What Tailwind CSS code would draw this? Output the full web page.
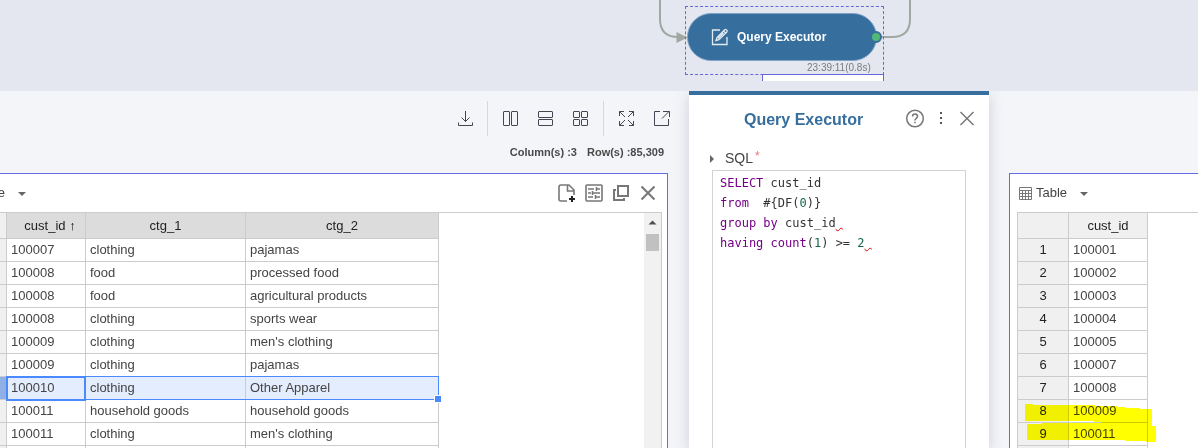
<!DOCTYPE html>
<html lang="en">

<head>
  <meta charset="UTF-8">
  <meta name="viewport" content="width=device-width, initial-scale=1.0">
  <title>Query Executor</title>
  <script src="https://cdn.jsdelivr.net/npm/@tailwindcss/browser@4"></script>
</head>

<body class="flex flex-col h-screen overflow-hidden bg-[#f4f5f8] font-['Liberation_Sans',Arial,sans-serif] text-[13px] text-[#444]">

  <!-- Workflow canvas -->
  <div class="relative h-[91px] shrink-0 bg-[#e4e7ef]">
    <svg class="absolute left-[640px] top-0 w-[300px] h-[91px]" viewBox="0 0 300 91" fill="none" stroke="#a0a8a3" stroke-width="2">
      <path d="M20 0V19Q20 37 38 37"></path>
      <path d="M36.500 32L47.500 37.500L36.500 43Z" fill="#a0a8a3" stroke="none"></path>
      <path d="M242 37H252Q270 37 270 19V0"></path>
    </svg>
    <div class="absolute left-[685px] top-[6px] w-[199px] h-[69px] border border-dashed border-[#6468dc]"></div>
    <div class="absolute left-[762px] top-[74px] w-[122px] h-[7px] bg-white border border-b-0 border-[#6468dc]"></div>
    <button type="button" class="absolute left-[687px] top-[13px] w-[190px] h-12 flex items-center gap-2 pl-[23px] rounded-full bg-[#366e9e] border border-[#7fa3c6] text-white text-xs font-bold">
      <svg class="w-[18px] h-[18px]" viewBox="0 0 18 18" fill="none" stroke="#e3ebf2" stroke-width="1.300">
        <path d="M9 2H1.500V16.500H16V9"></path>
        <path d="M5 12.500L6 9.500L13.700 1.800Q14.500 1 15.400 1.900L15.800 2.300Q16.600 3.200 15.800 4L8 11.700ZM12.500 3L14.800 5.200M7 10.500L12.500 5"></path>
      </svg>
      <span>Query Executor</span>
    </button>
    <span class="absolute left-[870px] top-[31px] w-3 h-3 rounded-full bg-[#52b878] border-2 border-[#366e9e]"></span>
    <span class="absolute left-[807px] top-[62px] text-[10px] leading-3 text-[#7a7a80]">23:39:11(0.8s)</span>
  </div>

  <main class="flex flex-1 min-h-0">

    <!-- Input data -->
    <section class="flex flex-col flex-1 min-w-0 overflow-hidden">
      <div class="flex items-center justify-end pt-[10px] pr-[10px] text-[#444753]">
        <button type="button" aria-label="Download" class="w-[35px] flex justify-center">
          <svg class="w-4 h-4" viewBox="0 0 16 16" fill="none" stroke="currentColor"><path d="M8.500 0V10.500M4.500 6.500L8.500 10.500L12.500 6.500M1.500 11.500V14.500H15.500V11.500"></path></svg>
        </button>
        <span class="w-px h-[35px] mx-[5px] bg-[#d5d8df]"></span>
        <button type="button" aria-label="Split vertically" class="w-[35px] flex justify-center">
          <svg class="w-4 h-4" viewBox="0 0 16 16" fill="none" stroke="currentColor"><rect x=".5" y=".5" width="6" height="14" rx=".5"></rect><rect x="8.500" y=".5" width="6" height="14" rx=".5"></rect></svg>
        </button>
        <button type="button" aria-label="Split horizontally" class="w-[35px] flex justify-center">
          <svg class="w-4 h-4" viewBox="0 0 16 16" fill="none" stroke="currentColor"><rect x=".5" y=".5" width="14" height="6" rx=".5"></rect><rect x=".5" y="8.500" width="14" height="6" rx=".5"></rect></svg>
        </button>
        <button type="button" aria-label="Grid" class="w-[35px] flex justify-center">
          <svg class="w-4 h-4" viewBox="0 0 16 16" fill="none" stroke="currentColor"><rect x=".5" y=".5" width="6" height="6" rx=".5"></rect><rect x="8.500" y=".5" width="6" height="6" rx=".5"></rect><rect x=".5" y="8.500" width="6" height="6" rx=".5"></rect><rect x="8.500" y="8.500" width="6" height="6" rx=".5"></rect></svg>
        </button>
        <span class="w-px h-[35px] mx-[5px] bg-[#d5d8df]"></span>
        <button type="button" aria-label="Full screen" class="w-[35px] flex justify-center">
          <svg class="w-4 h-4" viewBox="0 0 16 16" fill="none" stroke="currentColor"><path d="M.5 5V.5H5M.5 .5L6 6M10 .5H14.500V5M14.500 .5L9 6M.5 10V14.500H5M.5 14.500L6 9M10 14.500H14.500V10M14.500 14.500L9 9"></path></svg>
        </button>
        <button type="button" aria-label="Open in new window" class="w-[35px] flex justify-center">
          <svg class="w-4 h-4" viewBox="0 0 16 16" fill="none" stroke="currentColor"><path d="M6 .5H.5V14.500H14.500V8M9 .5H15.500V6M15 .5L8 7.500"></path></svg>
        </button>
      </div>
      <div class="flex justify-end gap-[10px] pt-2 pb-[13px] pr-[25px] text-[11px] leading-4 font-bold text-[#4a4a4a]">
        <span>Column(s) :3</span>
        <span>Row(s) :85,309</span>
      </div>

      <div class="flex flex-col flex-1 min-h-0 -ml-[53px] mr-[21px] pl-[7px] pr-[5px] bg-white border border-b-0 border-[#676be8]">
        <div class="flex items-center justify-between h-[38px] shrink-0 pr-[5px]">
          <button type="button" class="flex items-center pl-[19px]">
            <span class="w-[31px] text-left">Table</span>
            <svg class="w-2 h-4 ml-[13px]" viewBox="0 0 8 16" fill="#666"><path d="M0 7H8L4 11Z"></path></svg>
          </button>
          <div class="flex items-center gap-[9px] text-[#777]">
            <button type="button" aria-label="New file">
              <svg class="w-[18px] h-[18px]" viewBox="0 0 18 18" fill="none" stroke="currentColor" stroke-width="1.600"><path d="M9 17H3Q1 17 1 15V3Q1 1 3 1H11L16 6V11M9.500 1V7H16"></path><path d="M14 12V18M11 15H17" stroke="#222" stroke-width="2"></path></svg>
            </button>
            <button type="button" aria-label="Column settings">
              <svg class="w-[18px] h-[18px]" viewBox="0 0 18 18" fill="none" stroke="currentColor" stroke-width="1.600"><rect x="1" y="1" width="16" height="16" rx="1"></rect><path d="M3 5H9M11 5H15M3 9H6M8 9H15M3 13H8M10 13H15M11.500 3V7M7.500 7V11M10.500 11V15" stroke-width="1.500"></path></svg>
            </button>
            <button type="button" aria-label="Duplicate">
              <svg class="w-[18px] h-[18px]" viewBox="0 0 18 18" fill="none" stroke="currentColor" stroke-width="2"><path d="M6 2H16V12H6ZM4 6H2V16H12V14"></path></svg>
            </button>
            <button type="button" aria-label="Close">
              <svg class="w-[18px] h-[18px]" viewBox="0 0 18 18" fill="none" stroke="currentColor" stroke-width="2"><path d="M2.500 2.500L15.500 15.500M15.500 2.500L2.500 15.500"></path></svg>
            </button>
          </div>
        </div>

        <div class="flex flex-1 min-h-0 overflow-hidden justify-between border border-b-0 border-[#ccc]">
          <table class="table-fixed w-[483px] h-min border-separate border-spacing-0 [&_td]:h-[23px] [&_td]:pl-1 [&_td]:border-r [&_td]:border-b [&_td]:border-[#ccc] [&_tbody_th]:bg-[#f0f0f0] [&_th]:border-r [&_th]:border-b [&_th]:border-[#ccc] leading-4">
            <thead>
              <tr class="h-[26px] text-[#222] bg-[#dcdcdc]">
                <th class="w-[51px] bg-[#f0f0f0]"></th>
                <th class="w-[79px] pl-2 font-normal">cust_id <b class="text-black">↑</b></th>
                <th class="w-[160px] font-normal">ctg_1</th>
                <th class="w-[193px] font-normal">ctg_2</th>
              </tr>
            </thead>
            <tbody>
              <tr><th></th><td>100007</td><td>clothing</td><td>pajamas</td></tr>
              <tr><th></th><td>100008</td><td>food</td><td>processed food</td></tr>
              <tr><th></th><td>100008</td><td>food</td><td>agricultural products</td></tr>
              <tr><th></th><td>100008</td><td>clothing</td><td>sports wear</td></tr>
              <tr><th></th><td>100009</td><td>clothing</td><td>men's clothing</td></tr>
              <tr><th></th><td>100009</td><td>clothing</td><td>pajamas</td></tr>
              <tr class="relative bg-[#e4edfe]">
                <th class="!bg-[#8eb0e7]"></th>
                <td>100010<span class="absolute left-[50px] -top-px -bottom-px w-[80px] border-2 border-[#4b89ff]"></span></td>
                <td>clothing</td>
                <td>Other Apparel
                  <span class="absolute left-[50px] -top-px right-0 bottom-0 border border-[#4b89ff]"></span>
                  <span class="absolute -right-[3px] -bottom-[3px] w-2 h-2 bg-[#4b89ff] border border-white"></span>
                </td>
              </tr>
              <tr><th></th><td>100011</td><td>household goods</td><td>household goods</td></tr>
              <tr><th></th><td>100011</td><td>clothing</td><td>men's clothing</td></tr>
              <tr><th></th><td></td><td></td><td></td></tr>
            </tbody>
          </table>
          <div class="w-[17px] px-[2px] pt-[7px] bg-[#f1f1f1]">
            <svg class="w-[13px] h-[6px]" viewBox="0 0 13 6" fill="#505050"><path d="M2.500 4.500L6.500 .5L10.500 4.500Z"></path></svg>
            <div class="h-[17px] mt-2 bg-[#c1c1c1]"></div>
          </div>
        </div>
      </div>
    </section>

    <!-- Query settings -->
    <section class="flex flex-col w-[300px] shrink-0 px-[23px] bg-white border-t-4 border-[#366e9e] shadow-[0_4px_14px_rgba(60,80,120,0.22)]">
      <div class="flex items-center h-[47px] shrink-0">
        <h2 class="w-[174px] pl-[32px] pt-[2px] whitespace-nowrap text-base font-bold text-[#366e9e]">Query Executor</h2>
        <div class="flex flex-1 items-center justify-end gap-[14px] -mr-[11px] text-[#777]">
          <button type="button" aria-label="Help">
            <svg class="w-5 h-5" viewBox="0 0 20 20" fill="none" stroke="currentColor" stroke-width="1.500"><circle cx="10" cy="9.500" r="8.300"></circle><path d="M7.500 7.500Q7.500 5 10 5T12.500 7.500Q12.500 8.500 11.200 9.400Q10 10.200 10 11.500M10 12.800V14.300"></path></svg>
          </button>
          <button type="button" aria-label="More">
            <svg class="w-1 h-4" viewBox="0 0 4 16" fill="#555"><path d="M1 1H3V3H1ZM1 6H3V8H1ZM1 11H3V13H1Z"></path></svg>
          </button>
          <button type="button" aria-label="Close">
            <svg class="w-5 h-5" viewBox="0 0 20 20" fill="none" stroke="currentColor" stroke-width="1.500"><path d="M3.500 3L16.500 16M16.500 3L3.500 16"></path></svg>
          </button>
        </div>
      </div>
      <button type="button" class="flex items-center h-7 shrink-0 -ml-[3px]">
        <svg class="w-[6px] h-2 mt-[6px]" viewBox="0 0 6 8" fill="#666"><path d="M1 0L5 4L1 8Z"></path></svg>
        <span id="sqlLabel" class="ml-[10px] pt-1 text-sm leading-5">SQL</span>
        <span class="ml-[2px] text-xs leading-4 text-[#e8737b]">*</span>
      </button>
      <div contenteditable="true" spellcheck="false" role="textbox" aria-multiline="true" aria-labelledby="sqlLabel"
        class="flex-1 min-h-0 overflow-hidden pl-[7px] pt-[2px] border border-b-0 border-[#d3d3d3] whitespace-pre font-['DejaVu_Sans_Mono',monospace] text-xs leading-5 text-[#333] outline-none"><div><span class="text-[#770088]">SELECT</span> cust_id</div><div><span class="text-[#770088]">from</span>  #{DF(<span class="text-[#116644]">0</span>)}</div><div><span class="text-[#770088]">group</span> <span class="text-[#770088]">by</span> cust_id<span class="underline underline-offset-0 decoration-wavy decoration-1 decoration-[#d00]"> </span></div><div><span class="text-[#770088]">having</span> <span class="text-[#770088]">count</span>(<span class="text-[#116644]">1</span>) &gt;= <span class="text-[#116644]">2</span><span class="underline underline-offset-0 decoration-wavy decoration-1 decoration-[#d00]"> </span></div></div>
    </section>

    <!-- Output data -->
    <section class="flex flex-col w-[209px] shrink-0 pl-5 pt-[82px]">
      <div class="relative flex flex-col flex-1 min-h-0 overflow-hidden pl-[7px] bg-white border-t border-l border-[#676be8]">
        <button type="button" class="flex items-center h-[38px] shrink-0 pl-[2px]">
          <svg class="w-[13px] h-[13px]" viewBox="0 0 13 13" fill="none" stroke="#777"><path d="M.5 .5H12.500V12.500H.5ZM.5 3.500H12.500M.5 6.500H12.500M.5 9.500H12.500M3.500 3.500V12.500M6.500 3.500V12.500M9.500 3.500V12.500"></path></svg>
          <span class="w-[31px] ml-1 text-left">Table</span>
          <svg class="w-2 h-4 ml-[13px]" viewBox="0 0 8 16" fill="#666"><path d="M0 7H8L4 11Z"></path></svg>
        </button>
        <div class="flex-1 min-h-0 overflow-hidden border-t border-l border-[#ccc]">
          <table class="table-fixed w-[130px] border-separate border-spacing-0 [&_td]:h-[23px] [&_td]:pl-1 [&_td]:border-r [&_td]:border-b [&_td]:border-[#ccc] [&_th]:border-r [&_th]:border-b [&_th]:border-[#ccc] [&_th]:bg-[#f0f0f0] [&_th]:font-normal [&_th]:text-[#222] leading-4">
            <thead>
              <tr class="h-[26px]"><th class="w-[51px]"></th><th class="w-[79px]">cust_id</th></tr>
            </thead>
            <tbody>
              <tr><th>1</th><td>100001</td></tr>
              <tr><th>2</th><td>100002</td></tr>
              <tr><th>3</th><td>100003</td></tr>
              <tr><th>4</th><td>100004</td></tr>
              <tr><th>5</th><td>100005</td></tr>
              <tr><th>6</th><td>100007</td></tr>
              <tr><th>7</th><td>100008</td></tr>
              <tr><th>8</th><td>100009</td></tr>
              <tr><th>9</th><td>100011</td></tr>
              <tr><th></th><td></td></tr>
            </tbody>
          </table>
        </div>
        <!-- Highlighter marks -->
        <svg class="absolute left-[15px] top-[230px] w-[132px] h-[40px] mix-blend-multiply pointer-events-none" viewBox="0 0 132 40" fill="#ff0">
          <path d="M0 0H8V1H70V2H92V3H100V4H115V5H127V21H79V18H69V17H0Z"></path>
          <path d="M2 20H17V19H77V18H127V22H131V38H121V37H100V36H2Z"></path>
        </svg>
      </div>
    </section>
  </main>

</body>

</html>
